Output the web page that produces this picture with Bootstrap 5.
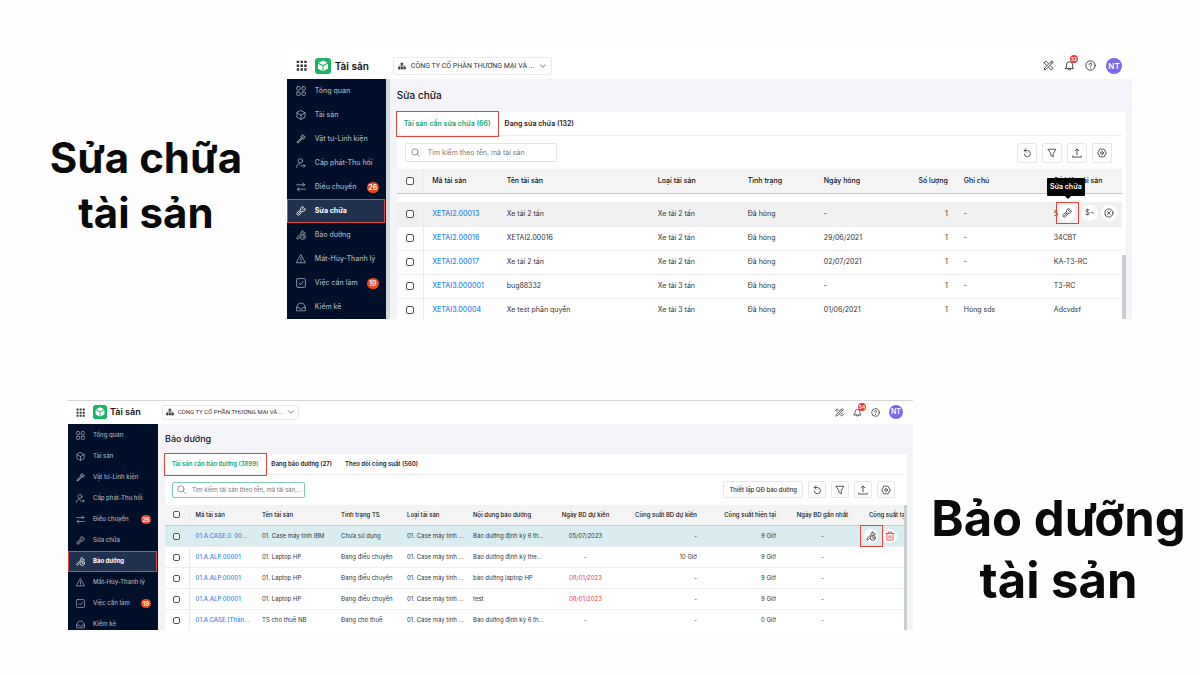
<!DOCTYPE html>
<html lang="vi">
<head>
<meta charset="utf-8">
<meta name="viewport" content="width=device-width, initial-scale=1">
<title>Tài sản – Sửa chữa và Bảo dưỡng</title>
<link rel="stylesheet" href="https://cdn.jsdelivr.net/npm/bootstrap@5.3.0/dist/css/bootstrap.min.css">
<style>
  body { font-family: Inter, "Liberation Sans", sans-serif; background: #fefefe; color: #111; }
  .headline { font-weight: 700; color: #0a0a0a; white-space: nowrap; }
  .top-row { grid-template-columns: 25% 1fr; padding: 52px 68px 0 5px; display: grid; }
  .bottom-row { grid-template-columns: 1fr 25%; padding: 81px 0 0 68px; display: grid; column-gap: 4px; }
  .top-row .headline { font-size: 42px; line-height: 55px; padding: 78px 0 0; }
  .bottom-row .headline { font-size: 49px; line-height: 62px; padding: 88px 0 0; }
  .ic { width: 11px; height: 11px; fill: none; stroke: currentColor; stroke-width: 1.3; stroke-linecap: round; stroke-linejoin: round; flex: none; }

  .app { --row: 24px; --pad: 8px; --side: 99px; --txt: 7px; --gap: 10px; --clip: -4px; font-size: var(--txt); line-height: 10px; background: #fff; min-width: 0; overflow: hidden; }
  .app-b { --row: 21px; --pad: 6px; --side: 90px; --txt: 6px; --gap: 9px; --clip: -5px; border-top: 1px solid #d5d7da; }
  .frame { margin-bottom: var(--clip); }
  .topbar { height: 27px; padding: 0 10px 0 9px; }
  .app-b .topbar { height: 23px; padding-left: 8px; }
  .quick { gap: var(--gap); }
  .brand { font-size: 10px; font-weight: 600; margin: 0 24px 0 4px; }
  .app-b .brand { font-size: 9px; margin: 0 21px 0 3px; }
  .logo { width: 16px; height: 16px; margin-left: 8px; }
  .app-b .logo { width: 14px; height: 14px; }
  .plain { border: 0; background: none; padding: 0; color: #333; display: flex; align-items: center; position: relative; }
  .org { font-family: Roboto, "Liberation Sans", sans-serif; border: 1px solid #ececf0; border-radius: 2px; background: #fff; padding: 0 4px; height: 18px; gap: 5px; display: flex; align-items: center; color: #333; }
  .app-b .org { height: 15px; gap: 4px; padding: 0 3px; }
  .org .ic, .app-b .org .ic { width: 8px; height: 8px; }
  .alerts { position: absolute; left: 6px; top: -5px; min-width: 8px; height: 8px; border-radius: 4px; background: #e53935; color: #fff; font-size: 5px; line-height: 8px; text-align: center; font-weight: 600; }
  .app-b .alerts { left: 5px; }
  .avatar { width: 16px; height: 16px; border-radius: 50%; background: #7b68ee; color: #fff; font-size: 8px; font-weight: 600; display: grid; place-items: center; }
  .app-b .avatar { width: 14px; height: 14px; font-size: 7px; }

  .side { width: var(--side); flex: none; background: #020f2b; border-right: 1px solid #0a1020; }
  .app-b .side { padding-top: 1px; }
  .side a { height: var(--row); display: flex; align-items: center; gap: 9px; padding: 0 6px 0 8px; color: #a4abb9; text-decoration: none; font-weight: 500; white-space: nowrap; }
  .side a.on { background: #20324f; color: #fff; font-weight: 700; outline: 1px solid #e0443e; outline-offset: -1px; }
  .side .count { margin-left: auto; background: #e8481c; color: #fff; border-radius: 6px; width: 12px; height: 11px; line-height: 11px; font-size: 7px; text-align: center; font-weight: 600; }
  .side .ic { width: 10px; height: 10px; margin-left: 1px; }
  .app-b .side a { gap: 8px; padding-left: 7px; }
  .app-b .side .count { width: 10px; height: 9px; line-height: 9px; font-size: 6px; }
  .app-b .ic, .app-b .side .ic { width: 9px; height: 9px; }

  .pane { background: #f4f4f8; padding: 0 6px 0 7px; border-left: 4px solid #d3dadd; overflow: hidden; min-width: 0; }
  .app-b .pane { border-left-width: 0; }
  .title { font-size: 10px; font-weight: 500; line-height: 33px; margin: 0; color: #111; }
  .app-b .title { font-size: 9px; line-height: 30px; }
  .sheet { background: #fff; padding-right: 4px; position: relative; }
  .app-b .sheet { padding-right: 3px; }
  .tabs { height: 24px; border-bottom: 1px solid #eee; }
  .app-b .tabs { height: 21px; }
  .tabs button { border: 0; background: none; height: 24px; padding: 0 7px; color: #222; font-weight: 600; white-space: nowrap; }
  .app-b .tabs button { height: 21px; padding: 0 8px 0 5px; }
  .tabs button.on { color: #0ea678; outline: 1px solid #e0443e; }
  .app-b .tabs button.on { padding: 0 8px 0 7px; }
  .tools { height: 33px; padding: 0 10px 0 8px; gap: 5px; }
  .app-b .tools { height: 30px; gap: 5px; padding-left: 7px; padding-right: 9px; }
  .search { width: 152px; height: 19px; border: 1px solid #e3e3e6; border-radius: 2px; gap: 8px; padding: 0 5px; color: #777; }
  .app-b .search { width: 133px; height: 16px; border-color: #7fccb3; padding: 0 2px 0 4px; gap: 6px; }
  .search .ic { width: 9px; height: 9px; }
  .search input { border: 0; outline: 0; padding: 0; width: 100%; min-width: 0; background: none; font-size: var(--txt); }
  .search input::placeholder { color: #777; opacity: 1; }
  .tool { height: 20px; min-width: 20px; border: 1px solid #e8e8eb; border-radius: 2px; background: #fff; color: #333; padding: 0 4px; display: grid; place-items: center; font-weight: 500; }
  .tool .ic { width: 10px; height: 10px; }
  .app-b .tool { height: 17px; min-width: 17px; padding: 0 3px; }
  .app-b .tool.wide { padding: 0 5px; }

  .grid-t { width: 100%; table-layout: fixed; border-collapse: collapse; }
  .grid-t th, .grid-t td { padding: 0 var(--pad); height: var(--row); white-space: nowrap; overflow: hidden; vertical-align: middle; color: #333; }
  .grid-t th { background: #f4f4f5; font-weight: 500; border-bottom: 1px solid #c9c9cb; color: #111; }
  .grid-t th:last-child { padding-right: 0; overflow: visible; }
  .grid-t td { border-bottom: 1px solid #efeff1; }
  .grid-t td:first-child, .grid-t th:first-child { border-right: 1px solid #ececee; padding: 0; }
  .grid-t a { color: #2f86eb; text-decoration: none; font-weight: 500; }
  .grid-t .gap td { height: 9px; border: 0; }
  .grid-t tr.hot td { background: #f1f1f2; }
  .app-b .grid-t tr.hot td { background: #d9edf1; }
  .grid-t .late { color: #ee3a43; }
  .grid-t input { appearance: none; display: block; margin: 0 auto; width: 8px; height: 8px; border: 1px solid #555; border-radius: 2px; background: #fff; }
  .app-b .grid-t input { width: 7px; height: 7px; }
  .grid-t td.acts { overflow: visible; position: relative; }
  .actions { position: absolute; left: 10px; top: 0; display: flex; align-items: center; gap: 3px; }
  .app-b .actions { left: -3px; top: -1px; gap: 0; }
  .pick { border: 1px solid #e0443e; width: 23px; height: 22px; display: grid; place-items: center; }
  .act { width: 16px; height: 16px; border: 0; border-radius: 50%; background: #fff; padding: 0; color: #333; display: grid; place-items: center; font-size: 7px; }
  .act .ic { width: 10px; height: 10px; }
  .app-b .act { width: 14px; height: 14px; }
  .tip { position: absolute; left: -9px; top: -24px; background: #050505; color: #fff; font-weight: 600; height: 18px; width: 38px; line-height: 18px; text-align: center; border-radius: 1px; z-index: 2; }
  .tip::after { content: ""; position: absolute; left: 18px; top: 18px; border: 3px solid transparent; border-top-color: #050505; }
  .bar { position: absolute; right: 0; top: 143px; bottom: 0; width: 4px; background: #c8cfd1; }
  .app-b .bar { width: 3px; top: 51px; }
</style>
</head>
<body>
<svg class="d-none" xmlns="http://www.w3.org/2000/svg">
  <symbol id="dots" viewBox="0 0 16 16"><path fill="currentColor" stroke="none" d="M1 1h3.500v3.500H1zM6.500 1H10v3.500H6.500zM12 1h3.500v3.500H12zM1 6.500h3.500V10H1zM6.500 6.500H10V10H6.500zM12 6.500h3.500V10H12zM1 12h3.500v3.500H1zM6.500 12H10v3.500H6.500zM12 12h3.500v3.500H12z"/></symbol>
  <symbol id="logo" viewBox="0 0 32 32"><rect width="32" height="32" rx="6" fill="#18b566"/><path fill="#fff" stroke="none" d="M16 5 25 9.500 16 14 7 9.500zM6 11.500l9 4.500v10l-9-4.500zM26 11.500 17 16v10l9-4.500z"/></symbol>
  <symbol id="org" viewBox="0 0 16 16"><path fill="currentColor" d="M6.500 2h3v3h-3zM1 11h3v3H1zM6.500 11h3v3h-3zM12 11h3v3h-3z"/><path d="M8 5v6M2.500 11V8h11v3"/></symbol>
  <symbol id="down" viewBox="0 0 16 16"><path d="m3 5.500 5 5 5-5"/></symbol>
  <symbol id="cross-tools" viewBox="0 0 16 16"><path d="m1.500 4 2.500-2.500 3.500 3.500M5 7.500 1.500 4M11 8.500l3.500 3.500-2.500 2.500L8.500 11M12.500 1.500 2.500 11.500l-1 3 3-1 10-10zM11 3l2 2"/></symbol>
  <symbol id="bell" viewBox="0 0 16 16"><path d="M2 12.500h12l-1.500-2V7a4.500 4.500 0 0 0-9 0v3.500zM6 12.500c0 3 4 3 4 0"/></symbol>
  <symbol id="help" viewBox="0 0 16 16"><circle cx="8" cy="8" r="6.800"/><path d="M6 6.500c0-3 4-2.500 4-.300C10 7.500 8 7.500 8 9.200M8 11.500v.100"/></symbol>
  <symbol id="tiles" viewBox="0 0 16 16"><rect x="1" y="1" width="5.500" height="5.500" rx="1.500"/><rect x="9.500" y="1" width="5.500" height="5.500" rx="1.500"/><rect x="1" y="9.500" width="5.500" height="5.500" rx="1.500"/><rect x="9.500" y="9.500" width="5.500" height="5.500" rx="1.500"/></symbol>
  <symbol id="cube" viewBox="0 0 16 16"><path d="m8 1 6.500 3.500v7L8 15l-6.500-3.500v-7zM1.500 4.500 8 8l6.500-3.500M8 8v7"/></symbol>
  <symbol id="parts" viewBox="0 0 16 16"><path fill="currentColor" fill-opacity=".4" d="M2 12.500 8 6.500l1.500 1.500-6 6.500c-1.500 0-2-1-1.500-2zM8 3.500 11 1l4 4-3 3z"/></symbol>
  <symbol id="person" viewBox="0 0 16 16"><circle cx="7" cy="4.500" r="3.500"/><path d="M1 15c0-4 2-6 6-6M8 12.500h6.500M12.500 10.500l2 2-2 2"/></symbol>
  <symbol id="swap" viewBox="0 0 16 16"><path d="M1 4.500h13M11 1.500l3 3-3 2M15 11.500H2M5 9l-3 2.500 3 3"/></symbol>
  <symbol id="wrench" viewBox="0 0 16 16"><path d="M7.500 6a3.500 3.500 0 0 1 4.500-4.500L10.500 4l1.500 1.500L14.500 4A3.500 3.500 0 0 1 10 8.500M7.500 6 2 10.500c-2 2.500 1 5.500 3.500 3.500L10 8.500M4 12l4-4"/></symbol>
  <symbol id="maintain" viewBox="0 0 16 16"><path d="M8 6c-.5-3 1-5 3.500-4.500L10.500 4 12 5l2-1.500c1 1 .5 3 0 3.500M7 7l-5.500 5c-1 1.500.5 3 2 2l2.500-2.500"/><circle cx="11" cy="11" r="4"/><path d="M11 9v2.500h1.500"/></symbol>
  <symbol id="warn" viewBox="0 0 16 16"><path d="M8 1.500 15 14H1zM8 6v4M8 12v.100"/></symbol>
  <symbol id="todo" viewBox="0 0 16 16"><rect x="1" y="1" width="14" height="14" rx="1.500"/><path d="m5 8 2.500 2.500L11.500 6"/></symbol>
  <symbol id="inbox" viewBox="0 0 16 16"><path d="M1 9 3 4c1-3 9-3 10 0l2 5v5H1zM1 9h4c0 3 6 3 6 0h4"/></symbol>
  <symbol id="find" viewBox="0 0 16 16"><circle cx="7" cy="7" r="5.500"/><path d="m11 11 4 4"/></symbol>
  <symbol id="undo" viewBox="0 0 16 16"><path d="M4 4h5a5 5 0 1 1-5.500 5.500M6.500 1 3.500 4l3 3"/></symbol>
  <symbol id="filter" viewBox="0 0 16 16"><path d="M2 2h12L10 9v5l-4-2V9z"/></symbol>
  <symbol id="upload" viewBox="0 0 16 16"><path d="M8 11V2M5 4.500 8 1.500l3 3M1 13v1.500h14V13"/></symbol>
  <symbol id="gear" viewBox="0 0 16 16"><path d="m6 1.500 2 1 2-1 2.500 1.500v2l2 1.500v3l-2 1.500v2L10 14.500l-2-1-2 1L3.500 13v-2l-2-1.500v-3l2-1.500V3z"/><circle cx="8" cy="8" r="2.200"/></symbol>
  <symbol id="close" viewBox="0 0 16 16"><circle cx="8" cy="8" r="6.500"/><path d="m5.500 5.500 5 5M10.500 5.500l-5 5"/></symbol>
  <symbol id="trash" viewBox="0 0 16 16"><path d="M1.500 4h13M5.500 4V1.500h5V4M3 4v10.500h10V4M6.500 7.500v4M9.500 7.500v4"/></symbol>
</svg>

<main class="container-fluid p-0">
  <section class="top-row">
    <h1 class="headline text-center m-0">Sửa chữa<br>tài sản</h1>
    <div class="app">
      <header class="topbar d-flex align-items-center">
        <button class="plain" aria-label="Ứng dụng"><svg class="ic"><use href="#dots"/></svg></button>
        <svg class="logo"><use href="#logo"/></svg>
        <span class="brand">Tài sản</span>
        <button class="org"><svg class="ic"><use href="#org"/></svg>CÔNG TY CỔ PHẦN THƯƠNG MẠI VÀ ...<svg class="ic"><use href="#down"/></svg></button>
        <div class="quick ms-auto d-flex align-items-center">
          <button class="plain" aria-label="Công cụ"><svg class="ic"><use href="#cross-tools"/></svg></button>
          <button class="plain" aria-label="Thông báo"><svg class="ic"><use href="#bell"/></svg><span class="alerts">32</span></button>
          <button class="plain" aria-label="Trợ giúp"><svg class="ic"><use href="#help"/></svg></button>
          <span class="avatar">NT</span>
        </div>
      </header>
      <div class="frame d-flex">
        <nav class="side">
          <a href="#"><svg class="ic"><use href="#tiles"/></svg>Tổng quan</a>
          <a href="#"><svg class="ic"><use href="#cube"/></svg>Tài sản</a>
          <a href="#"><svg class="ic"><use href="#parts"/></svg>Vật tư-Linh kiện</a>
          <a href="#"><svg class="ic"><use href="#person"/></svg>Cấp phát-Thu hồi</a>
          <a href="#"><svg class="ic"><use href="#swap"/></svg>Điều chuyển<span class="count">26</span></a>
          <a href="#" class="on"><svg class="ic"><use href="#wrench"/></svg>Sửa chữa</a>
          <a href="#"><svg class="ic"><use href="#maintain"/></svg>Bảo dưỡng</a>
          <a href="#"><svg class="ic"><use href="#warn"/></svg>Mất-Hủy-Thanh lý</a>
          <a href="#"><svg class="ic"><use href="#todo"/></svg>Việc cần làm<span class="count">19</span></a>
          <a href="#"><svg class="ic"><use href="#inbox"/></svg>Kiểm kê</a>
        </nav>
        <div class="pane flex-grow-1">
          <h2 class="title">Sửa chữa</h2>
          <div class="sheet">
            <div class="tabs d-flex"><button class="on">Tài sản cần sửa chữa (66)</button><button>Đang sửa chữa (132)</button></div>
            <div class="tools d-flex align-items-center">
              <label class="search d-flex align-items-center me-auto"><svg class="ic"><use href="#find"/></svg><input type="text" placeholder="Tìm kiếm theo tên, mã tài sản" aria-label="Tìm kiếm"></label>
              <button class="tool" aria-label="Tải lại"><svg class="ic"><use href="#undo"/></svg></button>
              <button class="tool" aria-label="Lọc"><svg class="ic"><use href="#filter"/></svg></button>
              <button class="tool" aria-label="Xuất"><svg class="ic"><use href="#upload"/></svg></button>
              <button class="tool" aria-label="Thiết lập"><svg class="ic"><use href="#gear"/></svg></button>
            </div>
            <table class="grid-t">
              <colgroup><col style="width:3.72%"><col style="width:10.34%"><col style="width:20.83%"><col style="width:12.41%"><col style="width:10.48%"><col style="width:11.03%"><col style="width:8.28%"><col style="width:12.41%"><col style="width:10.5%"></colgroup>
              <thead><tr><th><input type="checkbox" aria-label="Chọn tất cả"></th><th>Mã tài sản</th><th>Tên tài sản</th><th>Loại tài sản</th><th>Tình trạng</th><th>Ngày hỏng</th><th class="text-end">Số lượng</th><th>Ghi chú</th><th>Số hiệu tài sản</th></tr></thead>
              <tbody>
                <tr class="gap"><td colspan="9"></td></tr>
                <tr class="hot"><td><input type="checkbox" aria-label="Chọn"></td><td><a href="#">XETAI2.00013</a></td><td>Xe tải 2 tấn</td><td>Xe tải 2 tấn</td><td>Đã hỏng</td><td>-</td><td class="text-end">1</td><td>-</td><td class="acts">5<div class="actions"><span class="tip" role="tooltip">Sửa chữa</span><span class="pick"><button class="act" aria-label="Sửa chữa"><svg class="ic"><use href="#wrench"/></svg></button></span><button class="act" aria-label="Chi phí">$¬</button><button class="act" aria-label="Hủy"><svg class="ic"><use href="#close"/></svg></button></div></td></tr>
                <tr><td><input type="checkbox" aria-label="Chọn"></td><td><a href="#">XETAI2.00016</a></td><td>XETAI2.00016</td><td>Xe tải 2 tấn</td><td>Đã hỏng</td><td>29/06/2021</td><td class="text-end">1</td><td>-</td><td>34CBT</td></tr>
                <tr><td><input type="checkbox" aria-label="Chọn"></td><td><a href="#">XETAI2.00017</a></td><td>Xe tải 2 tấn</td><td>Xe tải 2 tấn</td><td>Đã hỏng</td><td>02/07/2021</td><td class="text-end">1</td><td>-</td><td>KA-T3-RC</td></tr>
                <tr><td><input type="checkbox" aria-label="Chọn"></td><td><a href="#">XETAI3.000001</a></td><td>bug88332</td><td>Xe tải 3 tấn</td><td>Đã hỏng</td><td>-</td><td class="text-end">1</td><td>-</td><td>T3-RC</td></tr>
                <tr><td><input type="checkbox" aria-label="Chọn"></td><td><a href="#">XETAI3.00004</a></td><td>Xe test phân quyền</td><td>Xe tải 3 tấn</td><td>Đã hỏng</td><td>01/06/2021</td><td class="text-end">1</td><td>Hỏng sds</td><td>Adcvdsf</td></tr>
              </tbody>
            </table>
            <div class="bar"></div>
          </div>
        </div>
      </div>
    </div>
  </section>

  <section class="bottom-row">
    <div class="app app-b">
      <header class="topbar d-flex align-items-center">
        <button class="plain" aria-label="Ứng dụng"><svg class="ic"><use href="#dots"/></svg></button>
        <svg class="logo"><use href="#logo"/></svg>
        <span class="brand">Tài sản</span>
        <button class="org"><svg class="ic"><use href="#org"/></svg>CÔNG TY CỔ PHẦN THƯƠNG MẠI VÀ ...<svg class="ic"><use href="#down"/></svg></button>
        <div class="quick ms-auto d-flex align-items-center">
          <button class="plain" aria-label="Công cụ"><svg class="ic"><use href="#cross-tools"/></svg></button>
          <button class="plain" aria-label="Thông báo"><svg class="ic"><use href="#bell"/></svg><span class="alerts">54</span></button>
          <button class="plain" aria-label="Trợ giúp"><svg class="ic"><use href="#help"/></svg></button>
          <span class="avatar">NT</span>
        </div>
      </header>
      <div class="frame d-flex">
        <nav class="side">
          <a href="#"><svg class="ic"><use href="#tiles"/></svg>Tổng quan</a>
          <a href="#"><svg class="ic"><use href="#cube"/></svg>Tài sản</a>
          <a href="#"><svg class="ic"><use href="#parts"/></svg>Vật tư-Linh kiện</a>
          <a href="#"><svg class="ic"><use href="#person"/></svg>Cấp phát-Thu hồi</a>
          <a href="#"><svg class="ic"><use href="#swap"/></svg>Điều chuyển<span class="count">26</span></a>
          <a href="#"><svg class="ic"><use href="#wrench"/></svg>Sửa chữa</a>
          <a href="#" class="on"><svg class="ic"><use href="#maintain"/></svg>Bảo dưỡng</a>
          <a href="#"><svg class="ic"><use href="#warn"/></svg>Mất-Hủy-Thanh lý</a>
          <a href="#"><svg class="ic"><use href="#todo"/></svg>Việc cần làm<span class="count">19</span></a>
          <a href="#"><svg class="ic"><use href="#inbox"/></svg>Kiểm kê</a>
        </nav>
        <div class="pane flex-grow-1">
          <h2 class="title">Bảo dưỡng</h2>
          <div class="sheet">
            <div class="tabs d-flex"><button class="on">Tài sản cần bảo dưỡng (3899)</button><button>Đang bảo dưỡng (27)</button><button>Theo dõi công suất (560)</button></div>
            <div class="tools d-flex align-items-center">
              <label class="search d-flex align-items-center me-auto"><svg class="ic"><use href="#find"/></svg><input type="text" placeholder="Tìm kiếm tài sản theo tên, mã tài sản,..." aria-label="Tìm kiếm"></label>
              <button class="tool wide">Thiết lập QĐ bảo dưỡng</button>
              <button class="tool" aria-label="Tải lại"><svg class="ic"><use href="#undo"/></svg></button>
              <button class="tool" aria-label="Lọc"><svg class="ic"><use href="#filter"/></svg></button>
              <button class="tool" aria-label="Xuất"><svg class="ic"><use href="#upload"/></svg></button>
              <button class="tool" aria-label="Thiết lập"><svg class="ic"><use href="#gear"/></svg></button>
            </div>
            <table class="grid-t">
              <colgroup><col style="width:3.25%"><col style="width:9.07%"><col style="width:10.69%"><col style="width:8.93%"><col style="width:8.93%"><col style="width:10.69%"><col style="width:10.69%"><col style="width:10.55%"><col style="width:10.69%"><col style="width:10.96%"><col style="width:5.55%"></colgroup>
              <thead><tr><th><input type="checkbox" aria-label="Chọn tất cả"></th><th>Mã tài sản</th><th>Tên tài sản</th><th>Tình trạng TS</th><th>Loại tài sản</th><th>Nội dung bảo dưỡng</th><th class="text-center">Ngày BD dự kiến</th><th class="text-end">Công suất BD dự kiến</th><th class="text-end">Công suất hiện tại</th><th class="text-center">Ngày BD gần nhất</th><th>Công suất tạ</th></tr></thead>
              <tbody>
                <tr class="hot"><td><input type="checkbox" aria-label="Chọn"></td><td><a href="#">01.A.CASE.0. 00...</a></td><td>01. Case máy tính IBM</td><td>Chưa sử dụng</td><td>01. Case máy tính ...</td><td>Bảo dưỡng định kỳ 6 th...</td><td class="text-center">05/07/2023</td><td class="text-end">-</td><td class="text-end">9 Giờ</td><td class="text-center">-</td><td class="acts"><div class="actions"><span class="pick"><button class="act" aria-label="Bảo dưỡng"><svg class="ic"><use href="#maintain"/></svg></button></span><button class="act late" aria-label="Xóa"><svg class="ic"><use href="#trash"/></svg></button></div></td></tr>
                <tr><td><input type="checkbox" aria-label="Chọn"></td><td><a href="#">01.A.ALP.00001</a></td><td>01. Laptop HP</td><td>Đang điều chuyển</td><td>01. Case máy tính ...</td><td>Bảo dưỡng định kỳ the...</td><td class="text-center">-</td><td class="text-end">10 Giờ</td><td class="text-end">9 Giờ</td><td class="text-center">-</td><td></td></tr>
                <tr><td><input type="checkbox" aria-label="Chọn"></td><td><a href="#">01.A.ALP.00001</a></td><td>01. Laptop HP</td><td>Đang điều chuyển</td><td>01. Case máy tính ...</td><td>bảo dưỡng laptop HP</td><td class="text-center late">08/01/2023</td><td class="text-end">-</td><td class="text-end">9 Giờ</td><td class="text-center">-</td><td></td></tr>
                <tr><td><input type="checkbox" aria-label="Chọn"></td><td><a href="#">01.A.ALP.00001</a></td><td>01. Laptop HP</td><td>Đang điều chuyển</td><td>01. Case máy tính ...</td><td>test</td><td class="text-center late">08/01/2023</td><td class="text-end">-</td><td class="text-end">9 Giờ</td><td class="text-center">-</td><td></td></tr>
                <tr><td><input type="checkbox" aria-label="Chọn"></td><td><a href="#">01.A.CASE.[Thàn...</a></td><td>TS cho thuê NB</td><td>Đang cho thuê</td><td>01. Case máy tính ...</td><td>Bảo dưỡng định kỳ 6 th...</td><td class="text-center">-</td><td class="text-end">-</td><td class="text-end">0 Giờ</td><td class="text-center">-</td><td></td></tr>
              </tbody>
            </table>
            <div class="bar"></div>
          </div>
        </div>
      </div>
    </div>
    <h1 class="headline text-center m-0">Bảo dưỡng<br>tài sản</h1>
  </section>
</main>
<script src="https://cdn.jsdelivr.net/npm/bootstrap@5.3.0/dist/js/bootstrap.bundle.min.js"></script>
</body>
</html>
